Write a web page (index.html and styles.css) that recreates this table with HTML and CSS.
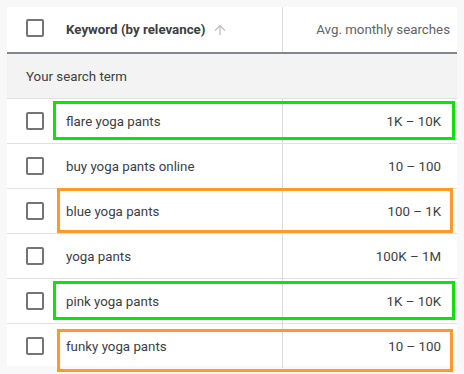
FILE: index.html
```html
<!DOCTYPE html>
<html>
<head>
<meta charset="utf-8">
<link rel="stylesheet" href="styles.css">
</head>
<body>
<div class="table">
  <div class="row head">
    <div class="cell cb"><span class="box"></span></div>
    <div class="cell kw"><b>Keyword (by relevance)</b><svg class="arrow" width="16" height="16" viewBox="0 0 24 24"><path d="M4 12l1.41 1.41L11 7.83V20h2V7.83l5.58 5.59L20 12l-8-8-8 8z" fill="#bdc1c6"/></svg></div>
    <div class="cell num">Avg. monthly searches</div>
  </div>
  <div class="row group"><div class="gtext">Your search term</div></div>
  <div class="row">
    <div class="cell cb"><span class="box"></span></div>
    <div class="cell kw">flare yoga pants</div>
    <div class="cell num">1K – 10K</div>
    <span class="mark green"></span>
  </div>
  <div class="row">
    <div class="cell cb"><span class="box"></span></div>
    <div class="cell kw">buy yoga pants online</div>
    <div class="cell num">10 – 100</div>
  </div>
  <div class="row">
    <div class="cell cb"><span class="box"></span></div>
    <div class="cell kw">blue yoga pants</div>
    <div class="cell num">100 – 1K</div>
    <span class="mark orange"></span>
  </div>
  <div class="row">
    <div class="cell cb"><span class="box"></span></div>
    <div class="cell kw">yoga pants</div>
    <div class="cell num">100K – 1M</div>
  </div>
  <div class="row">
    <div class="cell cb"><span class="box"></span></div>
    <div class="cell kw">pink yoga pants</div>
    <div class="cell num">1K – 10K</div>
    <span class="mark green"></span>
  </div>
  <div class="row last">
    <div class="cell cb"><span class="box"></span></div>
    <div class="cell kw">funky yoga pants</div>
    <div class="cell num">10 – 100</div>
    <span class="mark orange"></span>
  </div>
</div>
</body>
</html>
```
FILE: styles.css
```css
html, body { margin: 0; padding: 0; }
body {
  background: #f8f8f8;
  font-family: Roboto, "Liberation Sans", sans-serif;
  font-size: 13.3px;
  color: #3c4043;
  padding: 7px;
  height: 374px;
  box-sizing: border-box;
  overflow: hidden;
}
.table {
  width: 450px;
  height: 359px;
  background: #fff;
  position: relative;
}
.row {
  display: grid;
  grid-template-columns: 59px 216px 175px;
  height: 44px;
  border-bottom: 1px solid #e0e0e0;
  position: relative;
  align-items: stretch;
}
.row.last { border-bottom: none; }
.cell { display: flex; align-items: center; }
.cb { padding-left: 19px; }
.box {
  width: 14px; height: 14px;
  border: 2px solid #757575;
  border-radius: 2px;
  display: block;
}
.num {
  border-left: 1px solid #dadce0;
  justify-content: flex-end;
  padding-right: 16px;
}
.head { height: 45px; border-bottom: 2px solid #80868b; }
.head .cb { padding-bottom: 3px; }
.head .num { color: #5f6368; padding-right: 7px; }
.head b { font-weight: 700; color: #3c4043; }
.arrow { margin-left: 7px; }
.group {
  display: flex;
  align-items: center;
  background: #f3f3f3;
  padding-left: 19px;
}
.mark {
  position: absolute;
  border: 3px solid;
  box-sizing: border-box;
  pointer-events: none;
}
.mark.green { border-color: #0de20d; left: 46px; right: 2px; top: 2px; bottom: 3px; }
.mark.orange { border-color: #ff9a2a; left: 50px; right: 4px; top: -1px; bottom: 0; }
.row.last .mark.orange { top: 5px; bottom: -4px; }
```
